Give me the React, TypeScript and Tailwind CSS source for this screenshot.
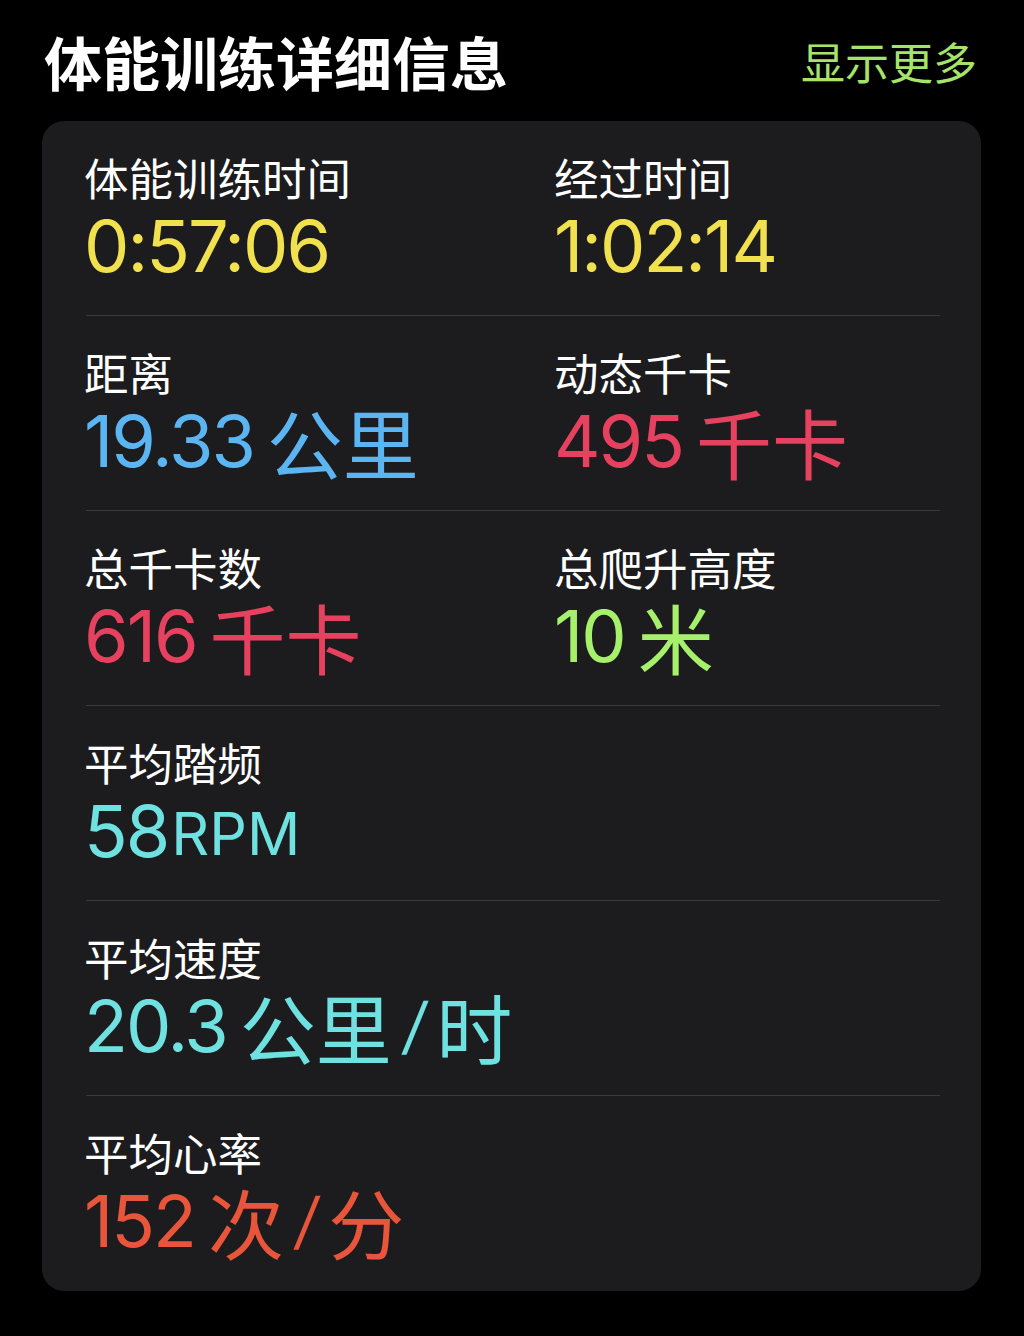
import React from "react";

const NUM = "font-['Inter','Noto_Sans_CJK_SC',sans-serif]";

type Part = { t: string; k: "n" | "u" | "s" | "c" };

function Value({ parts, color }: { parts: Part[]; color: string }) {
  return (
    <div className={`h-[82px] flex items-center whitespace-pre ${color}`}>
      {parts.map((p, i) => {
        if (p.k === "n")
          return (
            <span key={i} className={`${NUM} text-[72px] leading-[82px] tracking-[-2px]`}>
              {p.t}
            </span>
          );
        if (p.k === "c")
          return (
            <span key={i} className={`${NUM} text-[59px] leading-[82px] ml-[3px] mt-[6px]`}>
              {p.t}
            </span>
          );
        if (p.k === "s")
          return (
            <span key={i} className={`${NUM} text-[62px] leading-[82px] ml-[12px] mr-[10px] skew-x-[-8deg] inline-block`}>
              {p.t}
            </span>
          );
        return (
          <span key={i} className="font-['Noto_Sans_CJK_SC',sans-serif] text-[76px] leading-[82px] ml-[13px]">
            {p.t}
          </span>
        );
      })}
    </div>
  );
}

function Unit2({ t }: { t: string }) {
  return (
    <span className="font-['Noto_Sans_CJK_SC',sans-serif] text-[76px] leading-[82px]">{t}</span>
  );
}

function Cell({ label, parts, color, tail }: { label: string; parts: Part[]; color: string; tail?: string }) {
  return (
    <div className="flex flex-col -ml-[2px]">
      <div className="h-[53px] pb-[3px] flex items-center text-[44.5px] leading-none text-white font-['Noto_Sans_CJK_SC',sans-serif]">
        {label}
      </div>
      <div className={`flex items-center ${color}`}>
        <Value parts={parts} color={color} />
        {tail ? <Unit2 t={tail} /> : null}
      </div>
    </div>
  );
}

function Row({ children, last }: { children: React.ReactNode; last?: boolean }) {
  return (
    <div className={`h-[195px] pt-[31px] grid grid-cols-[470px_1fr] ${last ? "" : "border-b border-[#3a3a3c]"}`}>
      {children}
    </div>
  );
}

const YELLOW = "text-[#f2e14f]";
const BLUE = "text-[#5bb5f2]";
const RED = "text-[#e6425f]";
const GREEN = "text-[#a6f06c]";
const CYAN = "text-[#70e1e1]";
const ORANGE = "text-[#e9553b]";

export default function App() {
  return (
    <div className="w-[1024px] h-[1336px] bg-black">
      <div className="h-[121px] flex items-center justify-between pl-[44px] pr-[47px]">
        <div className="text-[58px] leading-none font-bold text-white font-['Noto_Sans_CJK_SC',sans-serif]">
          体能训练详细信息
        </div>
        <div className="text-[44px] leading-none text-[#a6e36b] font-['Noto_Sans_CJK_SC',sans-serif]">
          显示更多
        </div>
      </div>
      <div className="mx-[42px] w-[939px] h-[1170px] bg-[#1c1c1e] rounded-[22px] pl-[44px] pr-[41px]">
        <Row>
          <Cell label="体能训练时间" color={YELLOW} parts={[{ t: "0:57:06", k: "n" }]} />
          <Cell label="经过时间" color={YELLOW} parts={[{ t: "1:02:14", k: "n" }]} />
        </Row>
        <Row>
          <Cell label="距离" color={BLUE} parts={[{ t: "19.33", k: "n" }, { t: "公里", k: "u" }]} />
          <Cell label="动态千卡" color={RED} parts={[{ t: "495", k: "n" }, { t: "千卡", k: "u" }]} />
        </Row>
        <Row>
          <Cell label="总千卡数" color={RED} parts={[{ t: "616", k: "n" }, { t: "千卡", k: "u" }]} />
          <Cell label="总爬升高度" color={GREEN} parts={[{ t: "10", k: "n" }, { t: "米", k: "u" }]} />
        </Row>
        <Row>
          <Cell label="平均踏频" color={CYAN} parts={[{ t: "58", k: "n" }, { t: "RPM", k: "c" }]} />
          <div />
        </Row>
        <Row>
          <Cell
            label="平均速度"
            color={CYAN}
            parts={[{ t: "20.3", k: "n" }, { t: "公里", k: "u" }, { t: "/", k: "s" }]}
            tail="时"
          />
          <div />
        </Row>
        <Row last>
          <Cell
            label="平均心率"
            color={ORANGE}
            parts={[{ t: "152", k: "n" }, { t: "次", k: "u" }, { t: "/", k: "s" }]}
            tail="分"
          />
          <div />
        </Row>
      </div>
    </div>
  );
}
